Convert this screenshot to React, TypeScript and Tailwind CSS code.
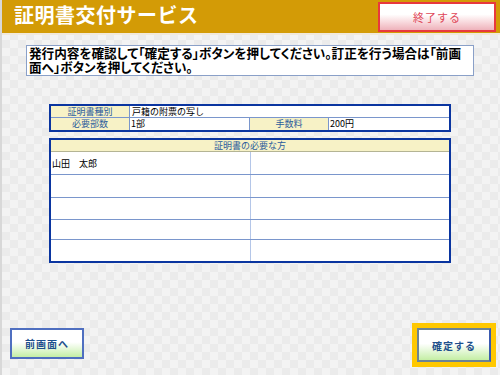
import React from 'react';

const font = "font-['Noto_Sans_CJK_JP','Noto_Sans',sans-serif]";

const rows = [
    { left: '山田\u3000太郎', right: '', h: 'h-[23px]' },
    { left: '', right: '', h: 'h-[23px]' },
    { left: '', right: '', h: 'h-[22px]' },
    { left: '', right: '', h: 'h-[20px]' },
    { left: '', right: '', h: 'h-[21px]' },
];

const App = () => {
    return (
        <div
            className={`${font} w-[500px] h-[375px] flex flex-col overflow-hidden border-l-2 border-[#d8d8d8] bg-[conic-gradient(#ebebeb_25%,#f3f3f3_0_50%,#ebebeb_0_75%,#f3f3f3_0)] bg-[length:16px_16px]`}
        >
            {/* header */}
            <div className="h-[35px] shrink-0 flex items-start justify-between bg-[#d39b06] border-b-2 border-[#f1e9dc] pl-[12px] pr-[4px]">
                <h1 className="mt-[2px] text-[20px] leading-[26px] font-bold text-white tracking-[0.5px]">
                    証明書交付サービス
                </h1>
                <button className="mt-[2px] w-[118px] h-[30px] border-2 border-[#e8383d] bg-gradient-to-b from-white from-40% to-[#eeb2bb] text-[11px] text-[#e0485a] tracking-[1px]">
                    終了する
                </button>
            </div>

            {/* message */}
            <div className="mt-[10px] ml-[24px] w-[448px] h-[31px] bg-white border border-[#8aa0c8] px-[2px] text-[12.6px] leading-[13.5px] font-bold text-black [font-feature-settings:'palt']">
                発行内容を確認して「確定する」ボタンを押してください。訂正を行う場合は「前画面へ」ボタンを押してください。
            </div>

            {/* summary table */}
            <div className="mt-[28px] ml-[47px] w-[402px] border-2 border-[#0a35a0] bg-white text-[9px] leading-[11px]">
                <div className="flex h-[12px] border-b border-[#7a96cc]">
                    <div className="w-[79px] bg-[#f7f2c6] text-[#2a5c9c] text-center border-r border-[#7a96cc]">
                        証明書種別
                    </div>
                    <div className="flex-1 pl-[2px] text-black">戸籍の附票の写し</div>
                </div>
                <div className="flex h-[12px]">
                    <div className="w-[79px] bg-[#f7f2c6] text-[#2a5c9c] text-center border-r border-[#7a96cc]">
                        必要部数
                    </div>
                    <div className="w-[120px] pl-[1px] text-black border-r border-[#7a96cc]">1部</div>
                    <div className="w-[79px] bg-[#f7f2c6] text-[#2a5c9c] text-center border-r border-[#7a96cc]">
                        手数料
                    </div>
                    <div className="flex-1 pl-[1px] text-black">200円</div>
                </div>
            </div>

            {/* persons table */}
            <div className="mt-[6px] ml-[47px] w-[402px] border-2 border-[#0a35a0] bg-white text-[9px] leading-[11px]">
                <div className="h-[12px] bg-[#f7f2c6] text-[#2a5c9c] text-center border-b border-[#b4b494]">
                    証明書の必要な方
                </div>
                {rows.map((r, i) => (
                    <div
                        key={i}
                        className={`flex ${r.h} ${i < rows.length - 1 ? 'border-b border-[#7a96cc]' : ''}`}
                    >
                        <div className="w-[200px] pl-[1px] pt-[6px] text-black border-r border-[#b4c6e8]">{r.left}</div>
                        <div className="flex-1 pl-[1px] pt-[6px] text-black">{r.right}</div>
                    </div>
                ))}
            </div>

            {/* footer buttons */}
            <div className="mt-auto mb-[8px] flex items-end justify-between pl-[8px] pr-[4px]">
                <button className="mb-[8px] w-[74px] h-[31px] border-2 border-[#4f6fc0] bg-gradient-to-b from-white from-45% to-[#c4eea4] text-[10px] font-bold text-[#1d4f8c] tracking-[1px]">
                    前画面へ
                </button>
                <div className="w-[84px] h-[44px] bg-[#ffc800] p-[5px]">
                    <button className="w-full h-full border-2 border-[#6d8494] border-r-[#3a5ab0] bg-gradient-to-b from-white from-45% to-[#c4eea4] text-[10px] font-bold text-[#1d4f8c] tracking-[1px]">
                        確定する
                    </button>
                </div>
            </div>
        </div>
    );
};

export default App;
